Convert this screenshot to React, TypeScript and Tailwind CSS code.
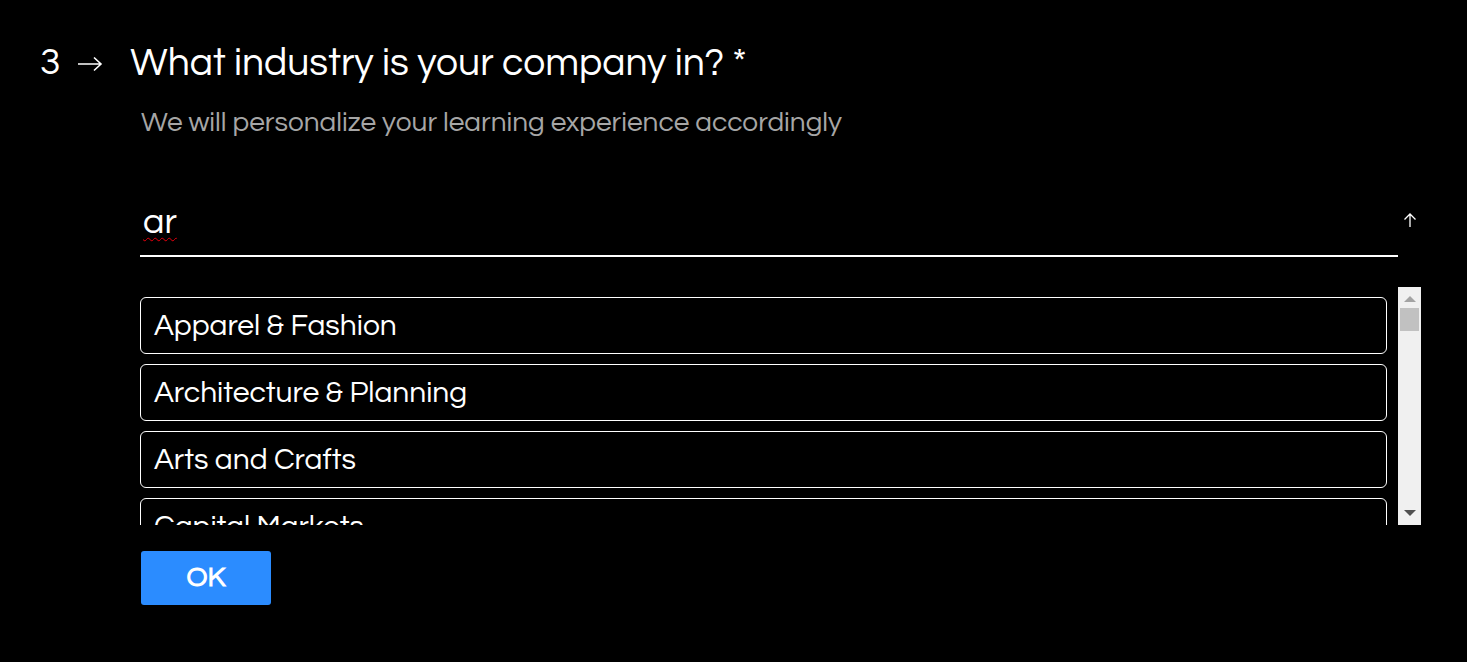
const items = [
  "Apparel & Fashion",
  "Architecture & Planning",
  "Arts and Crafts",
  "Capital Markets",
  "Aviation & Aerospace",
];

export default function App() {
  return (
    <div
      className="min-h-[662px] w-full bg-black text-white"
      style={{ fontFamily: '"Questrial", "Noto Sans", "Liberation Sans", sans-serif' }}
    >
      <div className="flex items-center pl-[40px] pt-[40px]">
        <span className="text-[37px] leading-[46px]">3</span>
        <svg width="26" height="16" viewBox="0 0 26 16" className="ml-[17px] mt-[2px]" fill="none" stroke="white" strokeWidth="1.6">
          <path d="M1 8h23M17 1.5l7 6.5-7 6.5" />
        </svg>
        <h1 className="ml-[27px] text-[39px] leading-[46px] font-normal">What industry is your company in? *</h1>
      </div>
      <div className="ml-[140px] w-[1281px]">
        <p className="mt-[20px] pl-[1px] text-[28px] leading-[34px] text-[#a6a6a6]">
          We will personalize your learning experience accordingly
        </p>
        <div className="mt-[60px] flex items-end">
          <div className="w-[1258px] border-b-2 border-white pb-[11px] pl-[3px]">
            <span className="text-[36px] leading-[44px] underline decoration-wavy decoration-red-600 decoration-1 underline-offset-4">ar</span>
          </div>
          <svg width="14" height="16" viewBox="0 0 14 16" className="mb-[29px] ml-[5px]" fill="none" stroke="white" strokeWidth="1.3">
            <path d="M7 15V2M1.5 7.5L7 2l5.5 5.5" />
          </svg>
        </div>
        <div className="mt-[30px] flex h-[238px]">
          <div className="flex flex-1 flex-col gap-[10px] overflow-hidden pt-[10px] pr-[11px]">
            {items.map((it) => (
              <div
                key={it}
                className="flex h-[57px] shrink-0 items-center rounded-[6px] border border-white pl-[13px] text-[30px]"
              >
                {it}
              </div>
            ))}
          </div>
          <div className="flex w-[23px] flex-col items-center bg-[#f0f0f0]">
            <div className="mt-[9px] h-0 w-0 border-x-[6px] border-b-[6px] border-x-transparent border-b-[#a3a3a3]" />
            <div className="mt-[6px] h-[23px] w-[19px] bg-[#c1c1c1]" />
            <div className="flex-1" />
            <div className="mb-[9px] h-0 w-0 border-x-[6px] border-t-[6px] border-x-transparent border-t-[#505050]" />
          </div>
        </div>
        <button className="mt-[26px] ml-[1px] h-[54px] w-[130px] rounded-[3px] bg-[#2b8cff] text-[28px] font-bold leading-none text-white">
          OK
        </button>
      </div>
    </div>
  );
}
